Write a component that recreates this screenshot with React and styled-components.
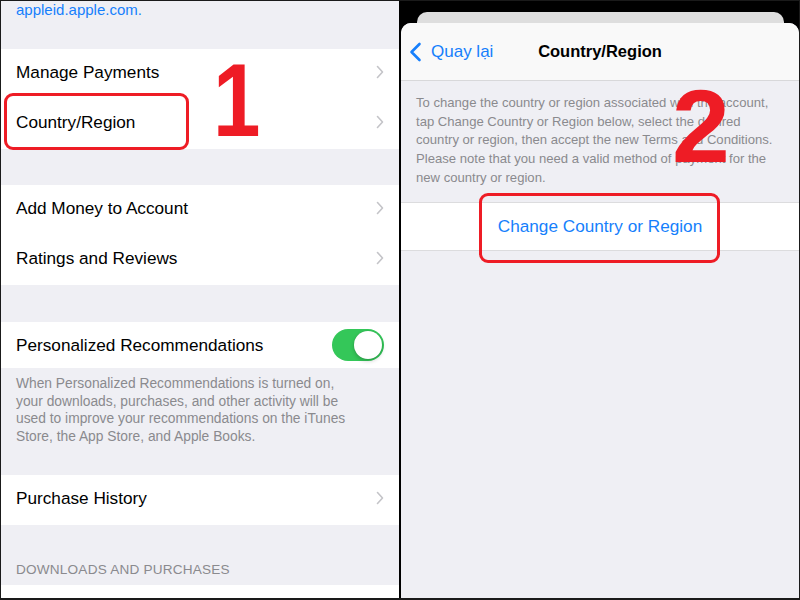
import React from "react";
import styled, { createGlobalStyle } from "styled-components";

const GlobalStyle = createGlobalStyle`
  html, body {
    margin: 0;
    padding: 0;
    background: #fff;
  }
  body {
    font-family: "Liberation Sans", Arial, sans-serif;
    -webkit-font-smoothing: antialiased;
  }
`;

const BLUE = "#167ffc";
const GREY_BG = "#efeff4";
const MUTED = "#8a8a8e";
const RED = "#ee1c25";

const Frame = styled.div`
  width: 800px;
  height: 600px;
  box-sizing: border-box;
  border: 1px solid #1a1a1a;
  border-bottom-width: 2px;
  background: #000;
  display: flex;
  gap: 2px;
  overflow: hidden;
`;

const LeftPanel = styled.div`
  position: relative;
  width: 398px;
  background: ${GREY_BG};
  display: flex;
  flex-direction: column;
`;

const LinkText = styled.div`
  margin-top: -1px;
  padding-left: 15px;
  height: 20px;
  line-height: 20px;
  font-size: 15px;
  color: ${BLUE};
`;

const Group = styled.div`
  margin-top: ${(p) => p.$gap || 0}px;
  background: #fff;
  display: flex;
  flex-direction: column;
  flex: ${(p) => (p.$fill ? 1 : "none")};
`;

const Row = styled.div`
  height: ${(p) => p.$h || 50}px;
  box-sizing: border-box;
  padding: 0 15px ${(p) => (p.$h ? 0 : 4)}px 15px;
  display: flex;
  align-items: center;
  justify-content: space-between;
`;

const Label = styled.span`
  font-size: 17.2px;
  color: #000;
`;

const Footnote = styled.div`
  padding: 7px 15px 0 15px;
  font-size: 13.8px;
  line-height: 17.5px;
  color: ${MUTED};
`;

const SectionHeader = styled.div`
  height: 60px;
  box-sizing: border-box;
  padding: 0 15px 7px 15px;
  display: flex;
  align-items: flex-end;
  font-size: 13.6px;
  line-height: 16px;
  letter-spacing: 0.2px;
  color: ${MUTED};
`;

const Track = styled.div`
  width: 52px;
  height: 32px;
  border-radius: 16px;
  background: #34c759;
  display: flex;
  align-items: center;
  justify-content: flex-end;
  padding: 0 2px;
  box-sizing: border-box;
`;

const Knob = styled.div`
  width: 28px;
  height: 28px;
  border-radius: 50%;
  background: #fff;
  box-shadow: 0 2px 4px rgba(0, 0, 0, 0.2), 0 0 0 0.5px rgba(0, 0, 0, 0.08);
`;

const RightPanel = styled.div`
  position: relative;
  flex: 1;
  display: flex;
  flex-direction: column;
`;

const BackCard = styled.div`
  margin: 11px 15px 0 16px;
  height: 11px;
  background: #dedede;
  border-radius: 10px 10px 0 0;
`;

const Sheet = styled.div`
  flex: 1;
  background: ${GREY_BG};
  border-radius: 10px 10px 0 0;
  overflow: hidden;
  display: flex;
  flex-direction: column;
`;

const NavBar = styled.div`
  height: 57px;
  background: #f9f9f9;
  border-bottom: 1px solid #d8d8da;
  display: grid;
  grid-template-columns: 1fr auto 1fr;
  align-items: center;
`;

const BackButton = styled.div`
  display: flex;
  align-items: center;
  gap: 9px;
  padding-left: 8px;
  font-size: 17px;
  color: ${BLUE};
`;

const Title = styled.div`
  font-size: 16.5px;
  font-weight: bold;
  color: #000;
`;

const Description = styled.div`
  padding: 13px 14px 0 15px;
  font-size: 13.1px;
  line-height: 18.7px;
  color: ${MUTED};
  white-space: nowrap;
`;

const ActionRow = styled.div`
  margin-top: 14px;
  height: 47px;
  background: #fff;
  border-top: 1px solid #dcdcde;
  border-bottom: 1px solid #dcdcde;
  display: flex;
  align-items: center;
  justify-content: center;
  font-size: 17.2px;
  color: ${BLUE};
`;

const Highlight = styled.div`
  position: absolute;
  left: ${(p) => p.$x}px;
  top: ${(p) => p.$y}px;
  width: ${(p) => p.$w}px;
  height: ${(p) => p.$h}px;
  box-sizing: border-box;
  border: 3px solid ${RED};
  border-radius: 9px;
`;

const Step = styled.div`
  position: absolute;
  left: ${(p) => p.$x}px;
  top: ${(p) => p.$y}px;
  font-family: "Liberation Sans", Arial, sans-serif;
  font-weight: bold;
  font-size: 104px;
  line-height: 1;
  color: ${RED};
  transform: scaleX(${(p) => p.$sx || 1});
  transform-origin: left top;
`;

const Chevron = () => (
  <svg width="8" height="14" viewBox="0 0 8 14">
    <path d="M1.5 1.5 L6.5 7 L1.5 12.5" fill="none" stroke="#c4c4c8" strokeWidth="1.6" strokeLinecap="round" strokeLinejoin="round" />
  </svg>
);

const BackChevron = () => (
  <svg width="13" height="20" viewBox="0 0 13 20">
    <path d="M10.5 2 L2.5 10 L10.5 18" fill="none" stroke={BLUE} strokeWidth="2.6" strokeLinecap="round" strokeLinejoin="round" />
  </svg>
);

const NavRow = ({ label }) => (
  <Row>
    <Label>{label}</Label>
    <Chevron />
  </Row>
);

export default function App() {
  return (
    <>
      <GlobalStyle />
      <Frame>
        <LeftPanel>
          <LinkText>appleid.apple.com.</LinkText>
          <Group $gap={29}>
            <NavRow label="Manage Payments" />
            <NavRow label="Country/Region" />
          </Group>
          <Group $gap={36}>
            <NavRow label="Add Money to Account" />
            <NavRow label="Ratings and Reviews" />
          </Group>
          <Group $gap={37}>
            <Row $h={46}>
              <Label>Personalized Recommendations</Label>
              <Track>
                <Knob />
              </Track>
            </Row>
          </Group>
          <Footnote>
            When Personalized Recommendations is turned on,
            <br />
            your downloads, purchases, and other activity will be
            <br />
            used to improve your recommendations on the iTunes
            <br />
            Store, the App Store, and Apple Books.
          </Footnote>
          <Group $gap={30}>
            <NavRow label="Purchase History" />
          </Group>
          <SectionHeader>DOWNLOADS AND PURCHASES</SectionHeader>
          <Group $fill />

          <Highlight $x={3} $y={92} $w={185} $h={57} />
          <Step $x={212} $y={47} $sx={0.82}>1</Step>
        </LeftPanel>

        <RightPanel>
          <BackCard />
          <Sheet>
            <NavBar>
              <BackButton>
                <BackChevron />
                Quay lại
              </BackButton>
              <Title>Country/Region</Title>
              <div />
            </NavBar>
            <Description>
              To change the country or region associated with the account,
              <br />
              tap Change Country or Region below, select the desired
              <br />
              country or region, then accept the new Terms and Conditions.
              <br />
              Please note that you need a valid method of payment for the
              <br />
              new country or region.
            </Description>
            <ActionRow>Change Country or Region</ActionRow>
          </Sheet>

          <Highlight $x={78} $y={192} $w={241} $h={70} />
          <Step $x={271} $y={73}>2</Step>
        </RightPanel>
      </Frame>
    </>
  );
}
